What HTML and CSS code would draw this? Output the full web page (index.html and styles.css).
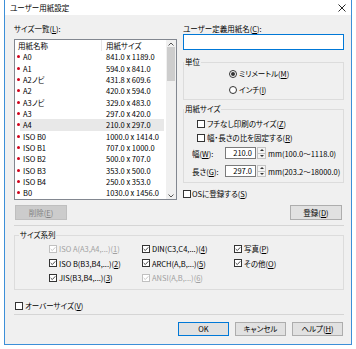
FILE: index.html
```html
<!DOCTYPE html>
<html lang="ja">
<head>
  <meta charset="utf-8">
  <title>ユーザー用紙設定</title>
  <link rel="stylesheet" href="styles.css">
</head>
<body>
  <div class="window">
    <div class="titlebar">
      <span>ユーザー用紙設定</span>
      <svg class="close" width="8" height="8" viewBox="0 0 8 8"><path d="M0.5 0.5 L7.5 7.5 M7.5 0.5 L0.5 7.5" stroke="#111" stroke-width="0.9"/></svg>
    </div>

    <div class="body">
      <div class="top">
        <div class="col col-left">
          <div class="caption">サイズ一覧(<u>L</u>):</div>
          <div class="listbox">
            <div class="list">
              <div class="list-head">
                <span class="col-name">用紙名称</span>
                <span class="col-size">用紙サイズ</span>
              </div>
              <div class="row"><span class="name"><i class="dot"></i>A0</span><span class="size">841.0 x 1189.0</span></div>
              <div class="row"><span class="name"><i class="dot"></i>A1</span><span class="size">594.0 x 841.0</span></div>
              <div class="row"><span class="name"><i class="dot"></i>A2ノビ</span><span class="size">431.8 x 609.6</span></div>
              <div class="row"><span class="name"><i class="dot"></i>A2</span><span class="size">420.0 x 594.0</span></div>
              <div class="row"><span class="name"><i class="dot"></i>A3ノビ</span><span class="size">329.0 x 483.0</span></div>
              <div class="row"><span class="name"><i class="dot"></i>A3</span><span class="size">297.0 x 420.0</span></div>
              <div class="row selected"><span class="name"><i class="dot"></i>A4</span><span class="size">210.0 x 297.0</span></div>
              <div class="row"><span class="name"><i class="dot"></i>ISO B0</span><span class="size">1000.0 x 1414.0</span></div>
              <div class="row"><span class="name"><i class="dot"></i>ISO B1</span><span class="size">707.0 x 1000.0</span></div>
              <div class="row"><span class="name"><i class="dot"></i>ISO B2</span><span class="size">500.0 x 707.0</span></div>
              <div class="row"><span class="name"><i class="dot"></i>ISO B3</span><span class="size">353.0 x 500.0</span></div>
              <div class="row"><span class="name"><i class="dot"></i>ISO B4</span><span class="size">250.0 x 353.0</span></div>
              <div class="row"><span class="name"><i class="dot"></i>B0</span><span class="size">1030.0 x 1456.0</span></div>
            </div>
            <div class="scrollbar">
              <span class="arrow"><svg width="6" height="4" viewBox="0 0 6 4"><path d="M0.5 3.5 L3 1 L5.5 3.5" fill="none" stroke="#555" stroke-width="1"/></svg></span>
              <span class="thumb"></span>
              <span class="track"></span>
              <span class="arrow"><svg width="6" height="4" viewBox="0 0 6 4"><path d="M0.5 0.5 L3 3 L5.5 0.5" fill="none" stroke="#555" stroke-width="1"/></svg></span>
            </div>
          </div>
          <button class="btn btn-delete" disabled>削除(<u>E</u>)</button>
        </div>

        <div class="col col-right">
          <div class="caption">ユーザー定義用紙名(<u>C</u>):</div>
          <input class="name-input" type="text">

          <div class="group unit-group">
            <span class="group-title">単位</span>
            <div class="radios">
              <label class="opt"><span class="radio on"></span>ミリメートル(<u>M</u>)</label>
              <label class="opt"><span class="radio"></span>インチ(<u>I</u>)</label>
            </div>
          </div>

          <div class="group paper-group">
            <span class="group-title">用紙サイズ</span>
            <div class="checks">
              <label class="opt"><span class="check"></span>フチなし印刷のサイズ(<u>Z</u>)</label>
              <label class="opt"><span class="check"></span>幅・長さの比を固定する(<u>R</u>)</label>
            </div>
            <div class="size-row size-width">
              <span class="size-label">幅(<u>W</u>):</span>
              <span class="spin-input">210.0</span>
              <span class="spinner"><span class="up"></span><span class="down"></span></span>
              <span class="range">mm(100.0～1118.0)</span>
            </div>
            <div class="size-row size-height">
              <span class="size-label">長さ(<u>G</u>):</span>
              <span class="spin-input">297.0</span>
              <span class="spinner"><span class="up"></span><span class="down"></span></span>
              <span class="range">mm(203.2～18000.0)</span>
            </div>
          </div>

          <label class="opt os-opt"><span class="check"></span>OSに登録する(<u>S</u>)</label>
          <button class="btn btn-register">登録(<u>D</u>)</button>
        </div>
      </div>

      <div class="sep"></div>

      <div class="group series-group">
        <span class="group-title">サイズ系列</span>
        <div class="series">
          <label class="opt disabled"><span class="check on"><svg viewBox="0 0 6 6"><path d="M0.7 3 L2.3 4.6 L5.3 1.3"/></svg></span>ISO A(A3,A4,...)(<u>1</u>)</label>
          <label class="opt"><span class="check on"><svg viewBox="0 0 6 6"><path d="M0.7 3 L2.3 4.6 L5.3 1.3"/></svg></span>DIN(C3,C4,...)(<u>4</u>)</label>
          <label class="opt"><span class="check on"><svg viewBox="0 0 6 6"><path d="M0.7 3 L2.3 4.6 L5.3 1.3"/></svg></span>写真(<u>P</u>)</label>
          <label class="opt"><span class="check on"><svg viewBox="0 0 6 6"><path d="M0.7 3 L2.3 4.6 L5.3 1.3"/></svg></span>ISO B(B3,B4,...)(<u>2</u>)</label>
          <label class="opt"><span class="check on"><svg viewBox="0 0 6 6"><path d="M0.7 3 L2.3 4.6 L5.3 1.3"/></svg></span>ARCH(A,B,...)(<u>5</u>)</label>
          <label class="opt"><span class="check on"><svg viewBox="0 0 6 6"><path d="M0.7 3 L2.3 4.6 L5.3 1.3"/></svg></span>その他(<u>O</u>)</label>
          <label class="opt"><span class="check on"><svg viewBox="0 0 6 6"><path d="M0.7 3 L2.3 4.6 L5.3 1.3"/></svg></span>JIS(B3,B4,...)(<u>3</u>)</label>
          <label class="opt disabled"><span class="check on"><svg viewBox="0 0 6 6"><path d="M0.7 3 L2.3 4.6 L5.3 1.3"/></svg></span>ANSI(A,B,...)(<u>6</u>)</label>
        </div>
      </div>

      <label class="opt oversize-opt"><span class="check"></span>オーバーサイズ(<u>V</u>)</label>

      <div class="sep sep-bottom"></div>

      <div class="footer">
        <button class="btn btn-ok">OK</button>
        <button class="btn">キャンセル</button>
        <button class="btn">ヘルプ(<u>H</u>)</button>
      </div>
    </div>
  </div>
</body>
</html>
```

FILE: styles.css
```css
*, *::before, *::after {
  margin: 0;
  padding: 0;
  box-sizing: border-box;
}

body {
  background-color: #FFFFFF;
  color: #000000;
  font-family: "Noto Sans CJK JP", "Noto Sans", sans-serif;
  font-size: 7.5px;
  font-feature-settings: "palt";
  line-height: 11px;
}

u {
  text-underline-offset: 1px;
}

.window {
  display: flex;
  flex-direction: column;
  width: 348px;
  height: 345px;
  margin-left: 4px;
  border: 1px solid #3C8FD8;
  border-top: none;
  background-color: #F0F0F0;
}

.titlebar {
  display: flex;
  align-items: center;
  justify-content: space-between;
  height: 15px;
  padding: 0 5px;
  background-color: #FFFFFF;
  line-height: 15px;
}

.body {
  display: flex;
  flex-direction: column;
  flex: 1;
  padding: 8px 7px 0 9px;
}

.top {
  display: grid;
  grid-template-columns: 163px 161px;
  column-gap: 6px;
}

.col {
  display: flex;
  flex-direction: column;
}

.caption {
  height: 11px;
}

.col-left .caption {
  margin-bottom: 5px;
}

/* list */

.listbox {
  display: flex;
  height: 161px;
  border: 1px solid #828790;
  background-color: #FFFFFF;
}

.list {
  flex: 1;
}

.list-head,
.row {
  display: grid;
  grid-template-columns: 87px 1fr;
}

.list-head {
  height: 11px;
}

.list-head .col-name {
  padding-left: 3px;
  border-right: 1px solid #E5E5E5;
}

.list-head .col-size,
.row .size {
  padding-left: 4px;
}

.row {
  height: 11.36px;
  align-items: center;
}

.row .name {
  display: flex;
  align-items: center;
  padding-left: 2px;
}

.dot {
  width: 3px;
  height: 3px;
  margin-right: 3px;
  border-radius: 50%;
  background-color: #D0021B;
}

.row.selected {
  background: linear-gradient(90deg, transparent 5px, #E8E8E8 5px, #E8E8E8 calc(100% - 2px), transparent calc(100% - 2px));
}

.scrollbar {
  display: flex;
  flex-direction: column;
  width: 10px;
  background-color: #F0F0F0;
}

.scrollbar .arrow {
  display: flex;
  align-items: center;
  justify-content: center;
  height: 7px;
}

.scrollbar .thumb {
  height: 34px;
  margin: 0 1px;
  background-color: #CDCDCD;
}

.scrollbar .track {
  flex: 1;
}

/* buttons */

.btn {
  height: 15px;
  border: 1px solid #ADADAD;
  background-color: #E1E1E1;
  color: #000000;
  font: inherit;
  line-height: 13px;
  text-align: center;
}

.btn:disabled {
  border-color: #BFBFBF;
  background-color: #CCCCCC;
  color: #838383;
}

.btn-delete {
  width: 52px;
  margin: 5px 0 0 1px;
}

.btn-register {
  align-self: flex-end;
  width: 52px;
  margin: 6px 2px 0 0;
}

.btn-ok {
  border-color: #0078D7;
}

/* inputs */

.name-input {
  height: 16px;
  border: 1px solid #0078D7;
  background-color: #FFFFFF;
  outline: none;
}

.group {
  border: 1px solid #DCDCDC;
}

.group-title {
  display: block;
  width: max-content;
  height: 10px;
  margin-top: -6px;
  padding: 0 1px;
  background-color: #F0F0F0;
  line-height: 10px;
}

.opt {
  display: flex;
  align-items: center;
  height: 11px;
  white-space: nowrap;
}

.opt.disabled {
  color: #A0A0A0;
}

.radio,
.check {
  display: flex;
  align-items: center;
  justify-content: center;
  flex-shrink: 0;
  width: 8px;
  height: 8px;
  margin-right: 2px;
  border: 1px solid #333333;
  background-color: #FFFFFF;
}

.radio {
  border-radius: 50%;
}

.radio.on::after {
  content: "";
  width: 4px;
  height: 4px;
  border-radius: 50%;
  background-color: #333333;
}

.check svg {
  width: 6px;
  height: 6px;
  fill: none;
  stroke: #333333;
  stroke-width: 0.9;
}

.opt.disabled .check {
  border-color: #C0C0C0;
}

.opt.disabled .check svg {
  stroke: #C0C0C0;
}

.unit-group {
  height: 38px;
  margin-top: 12px;
}

.radios {
  display: flex;
  flex-direction: column;
  gap: 5px;
  margin-top: 1px;
  padding-left: 45px;
}

.paper-group {
  height: 74px;
  margin-top: 9px;
}

.checks {
  display: flex;
  flex-direction: column;
  gap: 3px;
  margin-top: 4px;
  padding-left: 13px;
}

.size-row {
  display: flex;
  align-items: center;
  height: 12px;
  padding-left: 8px;
}

.size-width {
  margin-top: 4px;
}

.size-height {
  margin-top: 6px;
}

.size-label {
  width: 33px;
}

.spin-input {
  width: 31px;
  height: 12px;
  padding-right: 3px;
  border: 1px solid #7A7A7A;
  background-color: #FFFFFF;
  line-height: 10px;
  text-align: right;
}

.spinner {
  display: flex;
  flex-direction: column;
  width: 9px;
  height: 12px;
  margin-left: 1px;
  border: 1px solid #C4C4C4;
  background-color: #F4F4F4;
}

.spinner span {
  display: flex;
  align-items: center;
  justify-content: center;
  flex: 1;
}

.spinner .up {
  border-bottom: 1px solid #C4C4C4;
}

.spinner .up::after {
  content: "";
  border: 2px solid transparent;
  border-top: none;
  border-bottom: 2px solid #333333;
}

.spinner .down::after {
  content: "";
  border: 2px solid transparent;
  border-bottom: none;
  border-top: 2px solid #333333;
}

.range {
  margin-left: 2px;
}

.os-opt {
  margin-top: 5px;
}

.os-opt .check {
  margin-right: 1px;
}

.sep {
  height: 1px;
  margin-top: 5px;
  background-color: #D5D5D5;
}

.series-group {
  height: 55px;
  margin-top: 9px;
}

.series-group .group-title {
  margin-left: 4px;
}

.series {
  display: grid;
  grid-template-columns: 93px 92px 1fr;
  row-gap: 3.5px;
  margin-top: 3px;
  padding-left: 34px;
}

.oversize-opt {
  margin: 10px 0 0 1px;
}

.sep-bottom {
  margin-top: 3px;
}

.footer {
  display: flex;
  justify-content: flex-end;
  gap: 6px;
  margin: 7px 1px 0 0;
}

.footer .btn {
  width: 51px;
  height: 14px;
  line-height: 12px;
}
```
